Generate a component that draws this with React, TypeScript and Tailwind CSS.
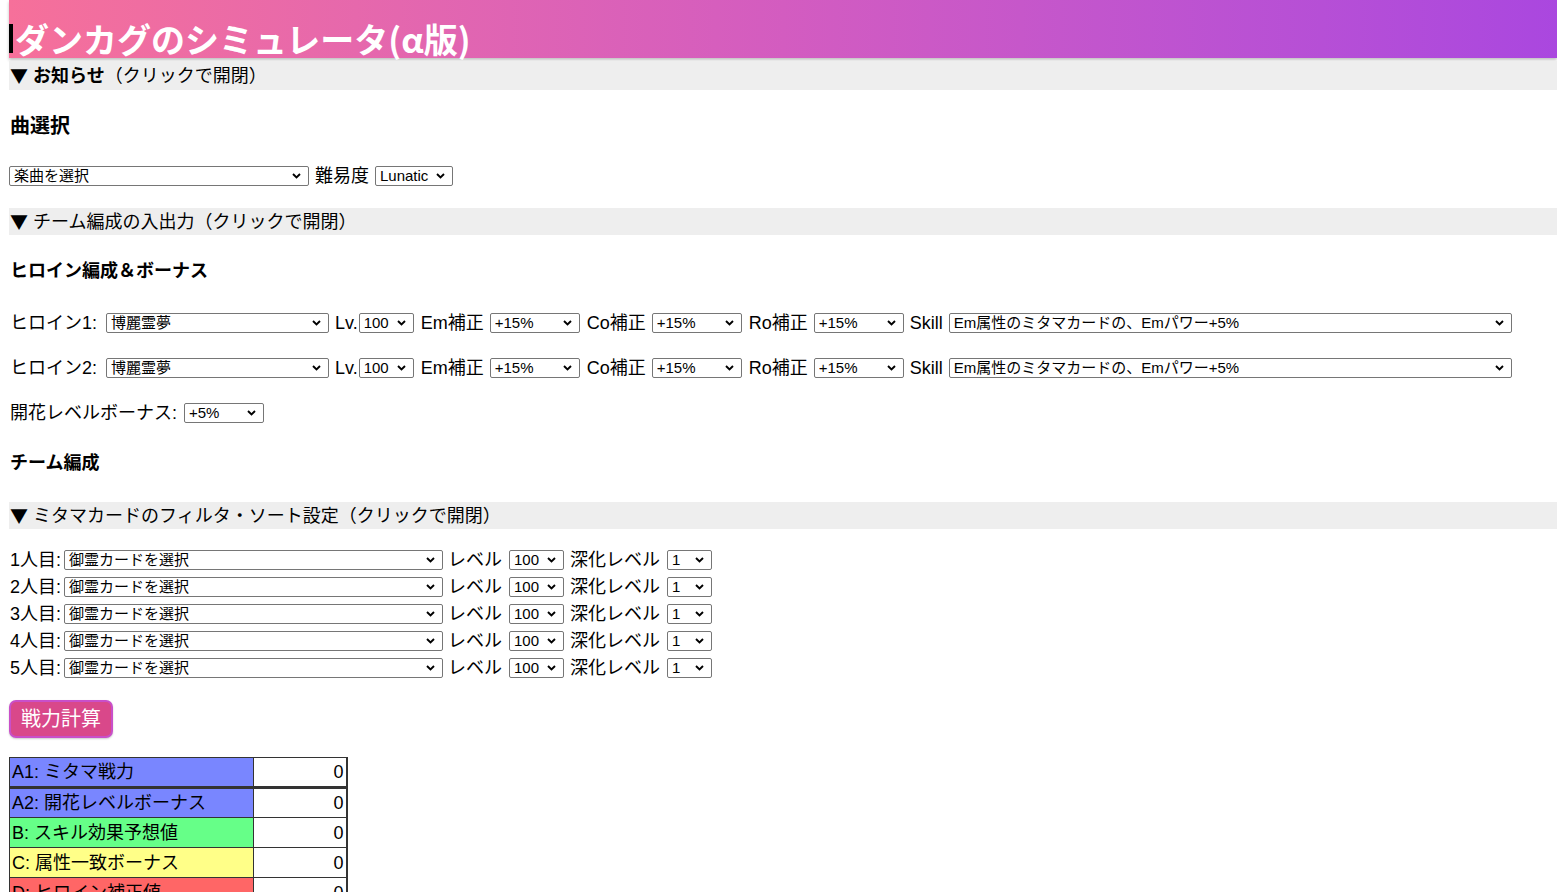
import React from "react";

const FONT = "font-['Liberation_Sans','Noto_Sans_CJK_JP',sans-serif]";

function Chevron() {
  return (
    <svg
      className="pointer-events-none absolute right-[8px] top-[7px]"
      width="9"
      height="6"
      viewBox="0 0 9 6"
    >
      <path d="M1 1l3.5 3.5L8 1" stroke="#000" strokeWidth="1.9" fill="none" />
    </svg>
  );
}

function Sel({ w, value }: { w: string; value: string }) {
  return (
    <span className={`relative inline-flex h-[20px] shrink-0 ${w}`}>
      <select
        defaultValue={value}
        className={`${FONT} appearance-none w-full h-full border border-[#767676] rounded-[2px] bg-white pl-[4px] pr-[18px] text-[15px] leading-[18px] text-black outline-none`}
      >
        <option>{value}</option>
      </select>
      <Chevron />
    </span>
  );
}

function Summary({ children, h }: { children: React.ReactNode; h: string }) {
  return (
    <div className={`${h} bg-[#eeeeee] flex items-center text-[18px] leading-[24px] pl-[1px]`}>
      <span className="mr-[5px] font-['Noto_Sans_CJK_JP',sans-serif] text-[18px] -translate-y-[1px]">▼</span>
      {children}
    </div>
  );
}

function HeroineRow({ n, mt }: { n: number; mt: string }) {
  return (
    <div className={`${mt} h-[20px] flex items-center text-[18px] leading-[20px] pl-[1px]`}>
      <span className="w-[96px]">ヒロイン{n}:</span>
      <Sel w="w-[223px]" value="博麗霊夢" />
      <span className="ml-[6px] mr-[1px]">Lv.</span>
      <Sel w="w-[55px]" value="100" />
      <span className="ml-[7px] mr-[6px]">Em補正</span>
      <Sel w="w-[90px]" value="+15%" />
      <span className="ml-[7px] mr-[6px]">Co補正</span>
      <Sel w="w-[90px]" value="+15%" />
      <span className="ml-[7px] mr-[6px]">Ro補正</span>
      <Sel w="w-[90px]" value="+15%" />
      <span className="ml-[6px] mr-[6px]">Skill</span>
      <Sel w="w-[563px]" value="Em属性のミタマカードの、Emパワー+5%" />
    </div>
  );
}

function CardRow({ n, mt }: { n: number; mt: string }) {
  return (
    <div className={`${mt} h-[20px] flex items-center text-[18px] leading-[20px] pl-[1px]`}>
      <span className="w-[54px]">{n}人目:</span>
      <Sel w="w-[379px]" value="御霊カードを選択" />
      <span className="ml-[5px] mr-[7px]">レベル</span>
      <Sel w="w-[55px]" value="100" />
      <span className="ml-[6px] mr-[7px]">深化レベル</span>
      <Sel w="w-[45px]" value="1" />
    </div>
  );
}

const rows: { label: string; bg: string; border: string }[] = [
  { label: "A1: ミタマ戦力", bg: "bg-[#7986ff]", border: "border-b-[3px]" },
  { label: "A2: 開花レベルボーナス", bg: "bg-[#7986ff]", border: "border-b" },
  { label: "B: スキル効果予想値", bg: "bg-[#66ff88]", border: "border-b" },
  { label: "C: 属性一致ボーナス", bg: "bg-[#ffff88]", border: "border-b" },
  { label: "D: ヒロイン補正値", bg: "bg-[#ff6666]", border: "border-b" },
];

export default function App() {
  return (
    <div className={`${FONT} min-h-screen bg-white text-black pl-[9px] overflow-hidden`}>
      <header className="h-[58px] bg-gradient-to-r from-[#f6709a] via-[#d35cc0] to-[#aa47df] shadow-[0_2px_3px_rgba(0,0,0,0.25)] flex items-end">
        <div className="h-[29px] mb-[5px] border-l-4 border-black pl-[2px] flex items-end">
          <h1 className="text-white font-bold text-[34px] leading-[34px] whitespace-nowrap translate-y-[3px] font-['Noto_Sans_CJK_JP',sans-serif]">
            ダンカグのシミュレータ(α版)
          </h1>
        </div>
      </header>

      <div className="mt-[3px]">
        <Summary h="h-[29px]">
          <span className="font-bold">お知らせ</span>
          <span>（クリックで開閉）</span>
        </Summary>
      </div>

      <h3 className="mt-[24px] h-[24px] leading-[24px] text-[20px] font-bold pl-[1px]">曲選択</h3>

      <div className="mt-[28px] h-[20px] flex items-center text-[18px] leading-[20px]">
        <Sel w="w-[300px]" value="楽曲を選択" />
        <span className="ml-[6px] mr-[6px]">難易度</span>
        <Sel w="w-[78px]" value="Lunatic" />
      </div>

      <div className="mt-[22px]">
        <Summary h="h-[27px]">
          <span>チーム編成の入出力（クリックで開閉）</span>
        </Summary>
      </div>

      <h4 className="mt-[24px] h-[24px] leading-[24px] text-[18px] font-bold pl-[1px]">
        ヒロイン編成＆ボーナス
      </h4>

      <HeroineRow n={1} mt="mt-[30px]" />
      <HeroineRow n={2} mt="mt-[25px]" />

      <div className="mt-[25px] h-[20px] flex items-center text-[18px] leading-[20px] pl-[1px]">
        <span className="mr-[7px]">開花レベルボーナス:</span>
        <Sel w="w-[80px]" value="+5%" />
      </div>

      <h4 className="mt-[28px] h-[24px] leading-[24px] text-[18px] font-bold pl-[1px]">チーム編成</h4>

      <div className="mt-[27px]">
        <Summary h="h-[27px]">
          <span>ミタマカードのフィルタ・ソート設定（クリックで開閉）</span>
        </Summary>
      </div>

      <CardRow n={1} mt="mt-[21px]" />
      <CardRow n={2} mt="mt-[7px]" />
      <CardRow n={3} mt="mt-[7px]" />
      <CardRow n={4} mt="mt-[7px]" />
      <CardRow n={5} mt="mt-[7px]" />

      <button className="mt-[22px] h-[38px] w-[104px] rounded-[7px] border-2 border-[#c94fc9] bg-[#d9488a] text-white text-[20px] leading-[24px] flex items-center justify-center shadow-[0_1px_2px_rgba(0,0,0,0.2)]">
        戦力計算
      </button>

      <table className="mt-[19px] border-collapse border-l border-t border-r-2 border-[#333] text-[18px] leading-[20px]">
        <tbody>
          {rows.map((r) => (
            <tr key={r.label} className={`h-[30px] ${r.border} border-[#333]`}>
              <td className={`${r.bg} w-[244px] border-r border-[#333] pl-[2px] whitespace-nowrap`}>{r.label}</td>
              <td className="w-[93px] bg-white text-right pr-[2px]">0</td>
            </tr>
          ))}
        </tbody>
      </table>
    </div>
  );
}
